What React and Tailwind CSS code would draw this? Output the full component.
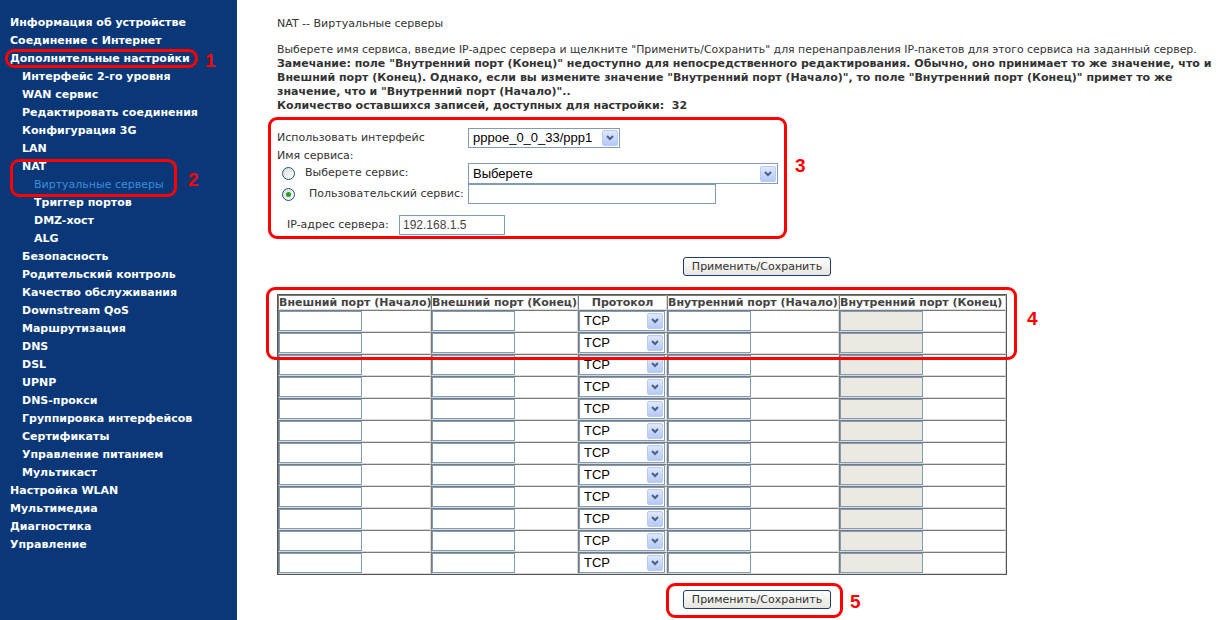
import React from 'react'

const MENU = [
  { t: 'Информация об устройстве', l: 0 },
  { t: 'Соединение с Интернет', l: 0 },
  { t: 'Дополнительные настройки', l: 0 },
  { t: 'Интерфейс 2-го уровня', l: 1 },
  { t: 'WAN сервис', l: 1 },
  { t: 'Редактировать соединения', l: 1 },
  { t: 'Конфигурация 3G', l: 1 },
  { t: 'LAN', l: 1 },
  { t: 'NAT', l: 1 },
  { t: 'Виртуальные серверы', l: 2, active: true },
  { t: 'Триггер портов', l: 2 },
  { t: 'DMZ-хост', l: 2 },
  { t: 'ALG', l: 2 },
  { t: 'Безопасность', l: 1 },
  { t: 'Родительский контроль', l: 1 },
  { t: 'Качество обслуживания', l: 1 },
  { t: 'Downstream QoS', l: 1 },
  { t: 'Маршрутизация', l: 1 },
  { t: 'DNS', l: 1 },
  { t: 'DSL', l: 1 },
  { t: 'UPNP', l: 1 },
  { t: 'DNS-прокси', l: 1 },
  { t: 'Группировка интерфейсов', l: 1 },
  { t: 'Сертификаты', l: 1 },
  { t: 'Управление питанием', l: 1 },
  { t: 'Мультикаст', l: 1 },
  { t: 'Настройка WLAN', l: 0 },
  { t: 'Мультимедиа', l: 0 },
  { t: 'Диагностика', l: 0 },
  { t: 'Управление', l: 0 },
]

const INDENT = ['pl-[10px]', 'pl-[22px]', 'pl-[34px]']

// XP-style dropdown arrow button
function Arrow() {
  return (
    <div className="w-[16px] h-[16px] shrink-0 rounded-[2px] border border-[#b9cbf3] bg-gradient-to-b from-[#dde8fe] to-[#b6c9f6] flex items-center justify-center">
      <svg width="8" height="6" viewBox="0 0 8 6">
        <path d="M1 1 L4 4 L7 1" stroke="#4d6185" strokeWidth="2" fill="none" />
      </svg>
    </div>
  )
}

function Select({ value, className }) {
  return (
    <div className={`flex items-center bg-white border border-[#7f9db9] pl-[4px] pr-[1px] font-['Liberation_Sans',Arial,sans-serif] text-[13px] text-black ${className}`}>
      <span className="flex-1 truncate">{value}</span>
      <Arrow />
    </div>
  )
}

function Input({ value = '', className = '', disabled }) {
  return (
    <div className={`border border-[#7f9db9] px-[3px] leading-[18px] ${disabled ? 'bg-[#ebe9e1]' : 'bg-white'} ${className}`}>
      {value}
    </div>
  )
}

function Radio({ checked }) {
  return (
    <div className="w-[13px] h-[13px] rounded-full border border-[#1d5281] bg-gradient-to-br from-[#dcdcd6] to-white flex items-center justify-center">
      {checked && <div className="w-[5px] h-[5px] rounded-full bg-[#21a121]" />}
    </div>
  )
}

function Mark({ className }) {
  return <div className={`absolute border-[3px] border-[#ff0000] rounded-[9px] ${className}`} />
}

function Num({ n, className }) {
  return (
    <div className={`absolute text-[#ff0000] font-bold text-[19px] font-['Liberation_Sans',Arial,sans-serif] leading-none ${className}`}>
      {n}
    </div>
  )
}

function SaveButton() {
  return (
    <button className="w-[148px] h-[19px] rounded-[3px] border border-[#1c3d6b] bg-gradient-to-b from-white to-[#e6e5dd] text-[11px] text-[#333] leading-[17px]">
      Применить/Сохранить
    </button>
  )
}

const cell = 'p-0 border border-t-[#7a7a7a] border-l-[#7a7a7a] border-r-[#d8d8d8] border-b-[#d8d8d8]'

export default function App() {
  const rows = Array.from({ length: 12 })
  return (
    <div className="relative flex w-[1219px] h-[620px] bg-white overflow-hidden font-['DejaVu_Sans',Verdana,sans-serif]">
      {/* Sidebar */}
      <div className="w-[237px] shrink-0 bg-[#093778] pt-[14px]">
        {MENU.map((m, i) => (
          <div
            key={i}
            className={`${INDENT[m.l]} h-[18px] leading-[18px] text-[11px] whitespace-nowrap ${m.active ? 'text-[#3d8ed8] font-normal' : 'text-white font-bold'}`}
          >
            {m.t}
          </div>
        ))}
      </div>

      {/* Content */}
      <div className="flex-1 pl-[40px] pt-[17px] text-[11px] text-[#333333]">
        <div className="leading-[14px]">NAT -- Виртуальные серверы</div>
        <div className="mt-[12px] leading-[14px] w-[940px] text-[10.9px]">
          Выберете имя сервиса, введие IP-адрес сервера и щелкните "Применить/Сохранить" для перенаправления IP-пакетов для этого сервиса на заданный сервер.
          <br />
          <b className="text-[11px]">
            Замечание: поле "Внутренний порт (Конец)" недоступно для непосредственного редактирования. Обычно, оно принимает то же значение, что и Внешний порт (Конец). Однако, если вы измените значение "Внутренний порт (Начало)", то поле "Внутренний порт (Конец)" примет то же значение, что и "Внутренний порт (Начало)"..
          </b>
          <br />
          <b className="text-[11px]">Количество оставшихся записей, доступных для настройки:&nbsp; 32</b>
        </div>

        {/* Form */}
        <div className="mt-[15px] w-[510px]">
          <div className="flex items-center h-[20px]">
            <span className="w-[191px]">Использовать интерфейс</span>
            <Select value="pppoe_0_0_33/ppp1" className="w-[152px] h-[20px]" />
          </div>
          <div className="h-[14px] leading-[14px] mt-[1px]">Имя сервиса:</div>
          <div className="flex items-center h-[21px]">
            <div className="w-[191px] flex items-center pl-[5px]">
              <Radio />
              <span className="ml-[10px]">Выберете сервис:</span>
            </div>
            <Select value="Выберете" className="w-[310px] h-[21px]" />
          </div>
          <div className="flex items-center h-[20px]">
            <div className="w-[191px] flex items-center pl-[5px]">
              <Radio checked />
              <span className="ml-[14px]">Пользовательский сервис:</span>
            </div>
            <Input className="w-[248px] h-[20px]" />
          </div>
          <div className="flex items-center h-[20px] mt-[11px] pl-[10px]">
            <span className="w-[112px]">IP-адрес сервера:</span>
            <Input value="192.168.1.5" className="w-[106px] h-[20px] text-[12px] text-[#444] font-['Liberation_Sans',Arial,sans-serif]" />
          </div>
        </div>

        <div className="mt-[22px] pl-[406px]">
          <SaveButton />
        </div>

        {/* Table */}
        <table className="mt-[18px] table-fixed w-[728px] border-separate border-spacing-0 border border-[#555]">
          <colgroup>
            <col className="w-[153px]" />
            <col className="w-[147px]" />
            <col className="w-[89px]" />
            <col className="w-[172px]" />
            <col className="w-[167px]" />
          </colgroup>
          <thead>
            <tr className="h-[15px] leading-[13px] font-bold text-[#444] whitespace-nowrap">
              <td className={`${cell} text-left`}>Внешний порт (Начало)</td>
              <td className={`${cell} text-left`}>Внешний порт (Конец)</td>
              <td className={`${cell} text-center`}>Протокол</td>
              <td className={`${cell} text-left`}>Внутренний порт (Начало)</td>
              <td className={`${cell} text-left`}>Внутренний порт (Конец)</td>
            </tr>
          </thead>
          <tbody>
            {rows.map((_, i) => (
              <tr key={i} className="h-[22px]">
                <td className={cell}><Input className="w-[83px] h-[20px]" /></td>
                <td className={cell}><Input className="w-[83px] h-[20px]" /></td>
                <td className={cell}><Select value="TCP" className="w-[86px] h-[20px]" /></td>
                <td className={cell}><Input className="w-[83px] h-[20px]" /></td>
                <td className={cell}><Input disabled className="w-[83px] h-[20px]" /></td>
              </tr>
            ))}
          </tbody>
        </table>

        <div className="mt-[15px] pl-[406px]">
          <SaveButton />
        </div>
      </div>

      {/* Red annotation overlays */}
      <Mark className="left-[5px] top-[49px] w-[193px] h-[19px]" />
      <Num n="1" className="left-[205px] top-[51px]" />
      <Mark className="left-[10px] top-[159px] w-[167px] h-[38px]" />
      <Num n="2" className="left-[188px] top-[170px]" />
      <Mark className="left-[268px] top-[117px] w-[519px] h-[122px]" />
      <Num n="3" className="left-[795px] top-[156px]" />
      <Mark className="left-[266px] top-[287px] w-[751px] h-[73px]" />
      <Num n="4" className="left-[1027px] top-[309px]" />
      <Mark className="left-[666px] top-[583px] w-[177px] h-[35px]" />
      <Num n="5" className="left-[850px] top-[592px]" />
    </div>
  )
}
